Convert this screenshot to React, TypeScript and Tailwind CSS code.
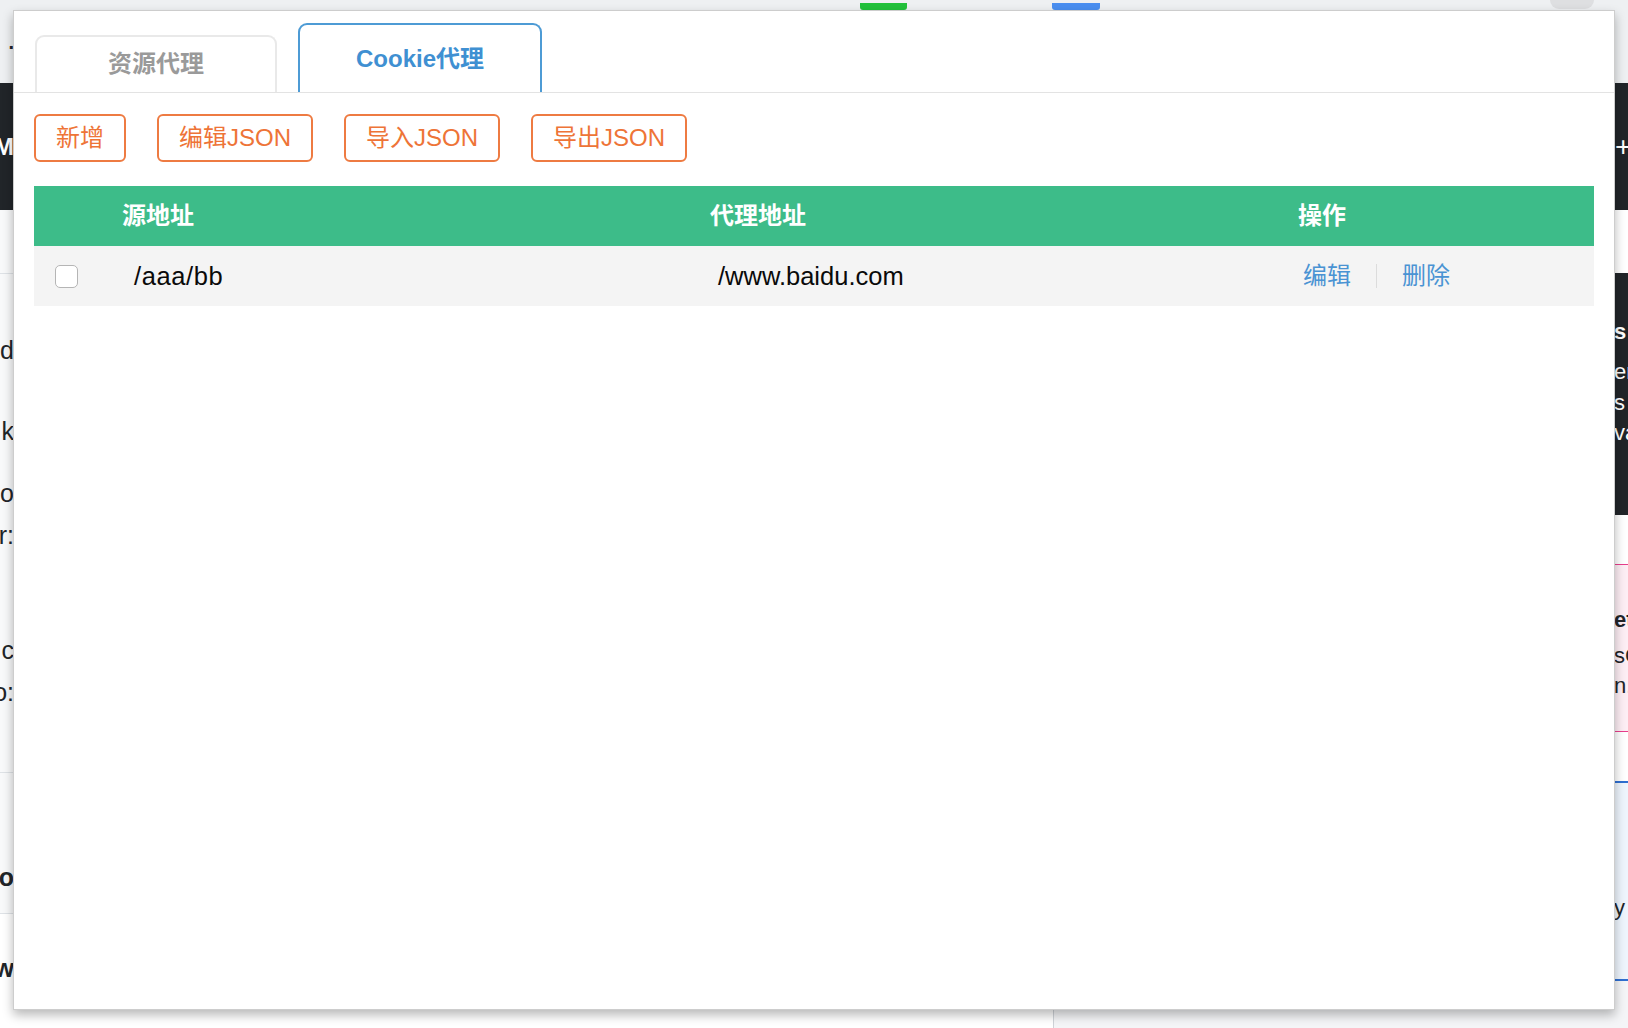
import { useState } from 'react'

const font = "font-['Liberation_Sans','Noto_Sans_CJK_SC',sans-serif]"

const rows = [{ src: '/aaa/bb', target: '/www.baidu.com' }]

function LeftStrip() {
  return (
    <div className="flex w-[14px] shrink-0 flex-col text-[25px] leading-none text-[#212529]">
      <div className="flex h-[83px] items-center justify-end overflow-hidden bg-[#eef0f2] text-[20px] font-bold">.</div>
      <div className="flex h-[127px] items-center justify-end overflow-hidden whitespace-nowrap bg-[#212529] text-[24px] font-bold text-white">
        M
      </div>
      <div className="h-[63px] bg-[#f8f9fa]" />
      <div className="h-px bg-[#dee2e6]" />
      <div className="flex h-[498px] flex-col items-end overflow-hidden whitespace-nowrap bg-[#f8f9fa]">
        <span className="mt-[64px]">d</span>
        <span className="mt-[56px]">k</span>
        <span className="mt-[37px]">o</span>
        <span className="mt-[17px]">r:</span>
        <span className="mt-[90px]">c</span>
        <span className="mt-[17px]">o:</span>
      </div>
      <div className="h-px bg-[#dee2e6]" />
      <div className="flex h-[140px] flex-col items-end overflow-hidden whitespace-nowrap bg-[#f8f9fa] font-bold">
        <span className="mt-[92px]">o</span>
      </div>
      <div className="h-px bg-[#dee2e6]" />
      <div className="flex flex-1 flex-col items-end overflow-hidden whitespace-nowrap bg-white font-bold">
        <span className="mt-[42px]">w</span>
      </div>
    </div>
  )
}

function RightStrip() {
  return (
    <div className="flex w-[14px] shrink-0 flex-col overflow-hidden whitespace-nowrap text-[22px] leading-none text-[#212529]">
      <div className="h-[83px] bg-[#eef0f2]" />
      <div className="flex h-[127px] items-center bg-[#212529] pl-[1px] text-[28px] text-white">+</div>
      <div className="h-[63px] bg-white" />
      <div className="flex h-[242px] flex-col bg-[#212529] text-white">
        <span className="mt-[48px] font-bold">s</span>
        <span className="mt-[18px]">er</span>
        <span className="mt-[9px]">s</span>
        <span className="mt-[8px]">va</span>
      </div>
      <div className="h-[49px] bg-white" />
      <div className="flex h-[168px] flex-col border-y border-[#e83e8c] bg-[#fdeef4]">
        <span className="mt-[44px] font-bold">et</span>
        <span className="mt-[14px]">sC</span>
        <span className="mt-[8px]">n.</span>
      </div>
      <div className="h-[49px] bg-white" />
      <div className="flex h-[200px] flex-col border-y-2 border-[#2f6fd1] bg-[#eef5fd]">
        <span className="mt-[114px]">y</span>
      </div>
      <div className="flex-1 bg-[#f4f5f7]" />
    </div>
  )
}

function Middle() {
  return (
    <div className="flex flex-1 flex-col">
      <div className="flex h-[10px] items-end bg-[#eef0f2]">
        <div className="ml-[846px] h-[7px] w-[47px] rounded-b-[3px] bg-[#22c13b]" />
        <div className="ml-[145px] h-[7px] w-[48px] rounded-b-[3px] bg-[#4a8ef0]" />
        <div className="ml-[450px] h-[9px] w-[44px] self-start rounded-b-full bg-[#dedfe1]" />
      </div>
      <div className="flex-1" />
      <div className="flex h-[19px]">
        <div className="w-[1039px] bg-white" />
        <div className="w-px bg-[#cfd3d8]" />
        <div className="flex-1 bg-[#f4f5f7]" />
      </div>
    </div>
  )
}

function Tabs({ active, onChange }: { active: number; onChange: (i: number) => void }) {
  const tabs = ['资源代理', 'Cookie代理']
  return (
    <div className="flex h-[82px] items-end gap-[21px] border-b border-[#e3e3e3] pl-[21px]">
      {tabs.map((t, i) => (
        <button
          key={t}
          onClick={() => onChange(i)}
          className={`flex items-center justify-center rounded-t-[9px] border-2 border-b-0 text-[24px] font-bold ${
            active === i
              ? 'h-[69px] w-[244px] border-[#4d9bd5] text-[#3f90d2]'
              : 'h-[57px] w-[242px] border-[#e9e9e9] pb-[2px] text-[#9a9a9a]'
          }`}
        >
          {t}
        </button>
      ))}
    </div>
  )
}

export default function App() {
  const [tab, setTab] = useState(1)
  const [checked, setChecked] = useState(false)

  return (
    <div className={`relative h-[1028px] w-[1628px] overflow-hidden bg-[#eef0f2] ${font}`}>
      {/* page behind the popup */}
      <div className="flex h-full">
        <LeftStrip />
        <Middle />
        <RightStrip />
      </div>

      {/* popup */}
      <div className="absolute left-[13px] top-[10px] flex h-[1000px] w-[1602px] flex-col border border-[#cdcdcd] bg-white shadow-[0_5px_10px_rgba(0,0,0,0.28)]">
        <Tabs active={tab} onChange={setTab} />

        <div className="mt-[21px] flex gap-[31px] pl-[20px]">
          {['新增', '编辑JSON', '导入JSON', '导出JSON'].map((b) => (
            <button
              key={b}
              className="flex h-[48px] items-center rounded-[6px] border-2 border-[#ee7b42] px-[20px] text-[24px] text-[#ee7437]"
            >
              {b}
            </button>
          ))}
        </div>

        {/* table */}
        <div className="mx-[20px] mt-[24px]">
          <div className="grid h-[60px] grid-cols-[76px_588px_588px_1fr] items-center bg-[#3dbc89] text-[24px] font-bold text-white">
            <div />
            <div className="pl-[12px]">源地址</div>
            <div className="pl-[12px]">代理地址</div>
            <div className="pl-[12px]">操作</div>
          </div>
          {rows.map((r) => (
            <div
              key={r.src}
              className="grid h-[60px] grid-cols-[76px_588px_588px_1fr] items-center bg-[#f4f4f4] text-[25.5px] text-[#0a0a0a]"
            >
              <div className="pl-[21px]">
                <button
                  onClick={() => setChecked(!checked)}
                  className="block h-[23px] w-[23px] rounded-[5px] border border-[#b5b5b5] bg-white"
                />
              </div>
              <div className="pl-[24px] tracking-[0.6px]">{r.src}</div>
              <div className="pl-[20px]">{r.target}</div>
              <div className="flex items-center pl-[17px] text-[24px] text-[#4a93d3]">
                <span>编辑</span>
                <span className="mx-[25px] h-[24px] w-px bg-[#dcdcdc]" />
                <span>删除</span>
              </div>
            </div>
          ))}
        </div>
      </div>
    </div>
  )
}
